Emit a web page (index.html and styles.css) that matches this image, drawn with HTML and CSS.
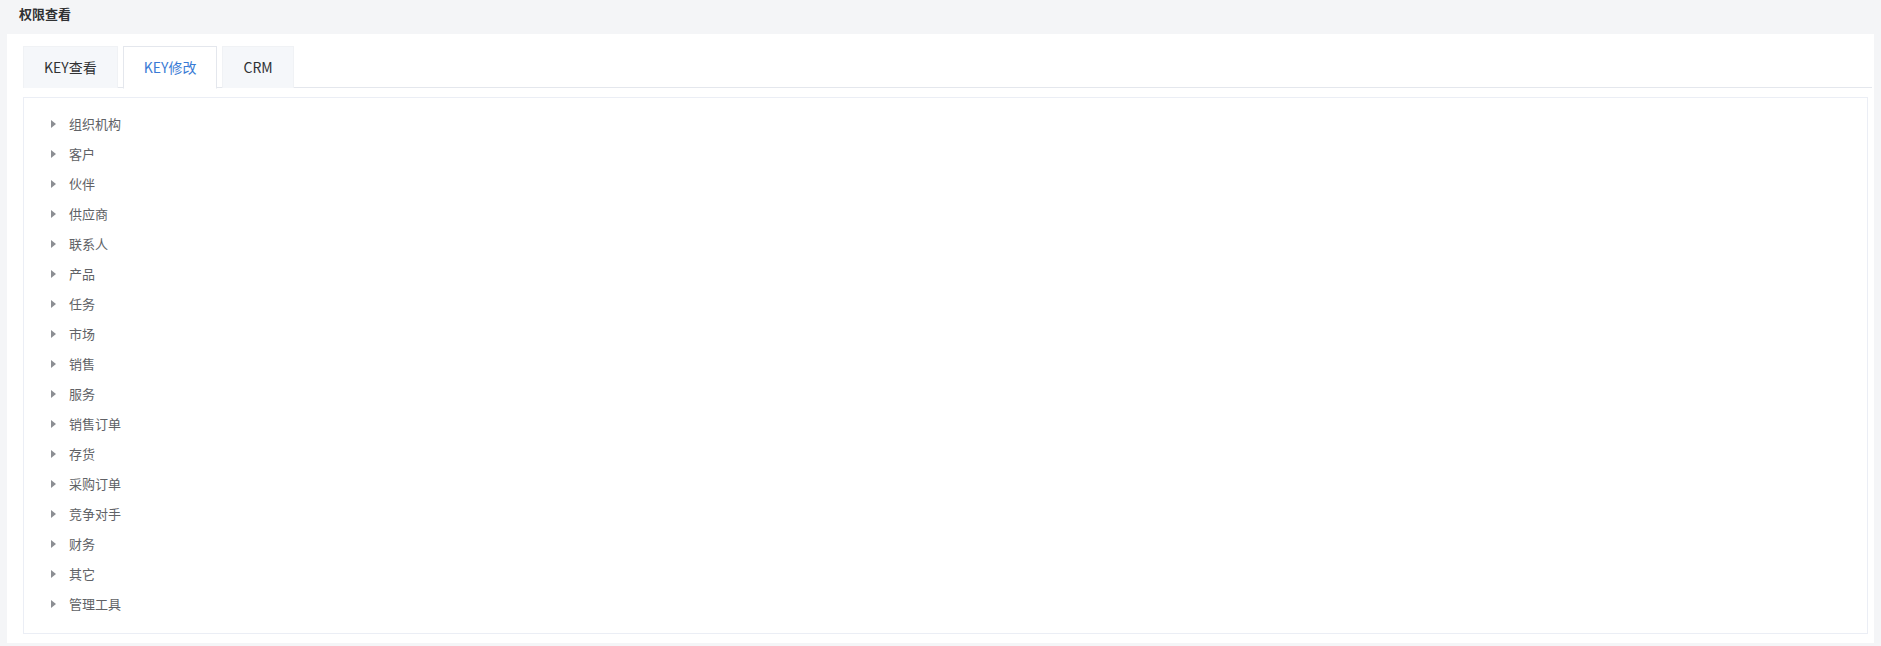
FILE: index.html
```html
<!DOCTYPE html>
<html lang="zh-CN">
<head>
<meta charset="utf-8">
<title>权限查看</title>
<link rel="stylesheet" href="styles.css">
</head>
<body>
<div class="header">权限查看</div>
<div class="panel">
  <div class="tabs">
    <div class="tab">KEY查看</div>
    <div class="tab active">KEY修改</div>
    <div class="tab">CRM</div>
  </div>
  <div class="tree">
    <div class="node"><span class="caret"></span><span class="label">组织机构</span></div>
    <div class="node"><span class="caret"></span><span class="label">客户</span></div>
    <div class="node"><span class="caret"></span><span class="label">伙伴</span></div>
    <div class="node"><span class="caret"></span><span class="label">供应商</span></div>
    <div class="node"><span class="caret"></span><span class="label">联系人</span></div>
    <div class="node"><span class="caret"></span><span class="label">产品</span></div>
    <div class="node"><span class="caret"></span><span class="label">任务</span></div>
    <div class="node"><span class="caret"></span><span class="label">市场</span></div>
    <div class="node"><span class="caret"></span><span class="label">销售</span></div>
    <div class="node"><span class="caret"></span><span class="label">服务</span></div>
    <div class="node"><span class="caret"></span><span class="label">销售订单</span></div>
    <div class="node"><span class="caret"></span><span class="label">存货</span></div>
    <div class="node"><span class="caret"></span><span class="label">采购订单</span></div>
    <div class="node"><span class="caret"></span><span class="label">竞争对手</span></div>
    <div class="node"><span class="caret"></span><span class="label">财务</span></div>
    <div class="node"><span class="caret"></span><span class="label">其它</span></div>
    <div class="node"><span class="caret"></span><span class="label">管理工具</span></div>
  </div>
</div>
</body>
</html>
```
FILE: styles.css
```css
* { box-sizing: border-box; }
html, body { margin: 0; padding: 0; }
body {
  background: #f4f5f7;
  font-family: "Microsoft YaHei", "Noto Sans CJK SC", "Liberation Sans", sans-serif;
  color: #303133;
  width: 1881px;
  height: 646px;
  overflow: hidden;
}
.header {
  height: 34px;
  line-height: 28px;
  padding-left: 19px;
  font-size: 13px;
  font-weight: bold;
  color: #303133;
}
.panel {
  margin: 0 7px 0 7px;
  background: #fff;
  padding: 12px 2px 10px 16px;
  height: 609px;
}
.tabs {
  display: flex;
  gap: 5px;
  height: 42px;
  border-bottom: 1px solid #e4e7ed;
}
.tab {
  height: 42px;
  line-height: 40px;
  padding: 0 20px;
  font-size: 14px;
  color: #303133;
  background: #f5f7fa;
  border: 1px solid #f0f2f5;
  border-bottom: none;
}
.tab.active {
  background: #fff;
  color: #3a7bd5;
  border: 1px solid #e4e7ed;
  border-bottom: 1px solid #fff;
  height: 43px;
}
.tree {
  margin-top: 9px;
  margin-right: 4px;
  border: 1px solid #ebeef5;
  padding: 11px 0 14px 0;
}
.node {
  height: 30px;
  display: flex;
  align-items: center;
  padding-left: 27px;
  font-size: 13px;
  color: #606266;
}
.caret {
  width: 0;
  height: 0;
  border-top: 4px solid transparent;
  border-bottom: 4px solid transparent;
  border-left: 5px solid #8c8e93;
  margin-right: 13px;
}
.label { line-height: 30px; }
```
